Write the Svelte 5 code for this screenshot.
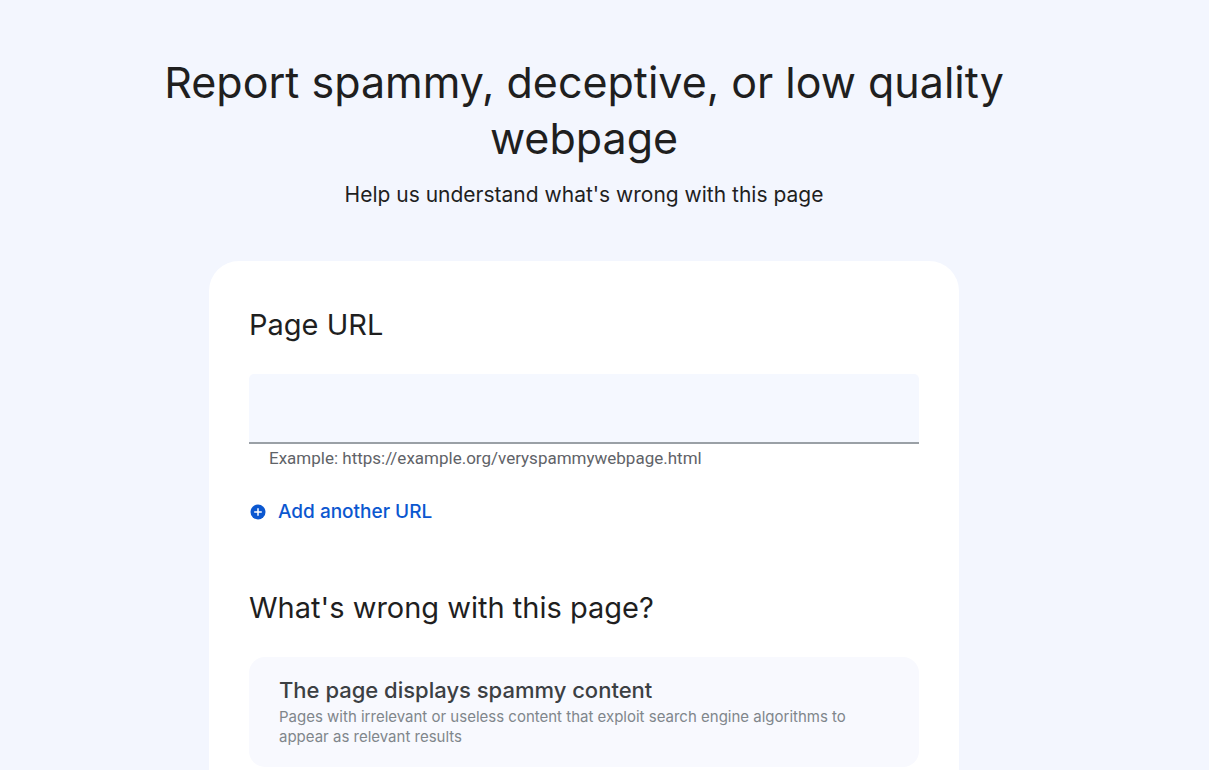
<script lang="ts">
	type Issue = {
		id: string;
		title: string;
		detail: string;
	};

	const issues: Issue[] = [
		{
			id: 'spammy',
			title: 'The page displays spammy content',
			detail:
				'Pages with irrelevant or useless content that exploit search engine algorithms to appear as relevant results'
		}
	];

	let urls = $state(['']);

	function addUrl() {
		urls.push('');
	}
</script>

<main class="page">
	<header class="intro">
		<h1>Report spammy, deceptive, or low quality webpage</h1>
		<p>Help us understand what's wrong with this page</p>
	</header>

	<form class="card">
		<h2 id="url-title">Page URL</h2>
		{#each urls as _, i}
			<div class="field">
				<input
					type="url"
					aria-labelledby="url-title"
					aria-describedby={`url-hint-${i}`}
					bind:value={urls[i]}
				/>
				<p class="hint" id={`url-hint-${i}`}>Example: https://example.org/veryspammywebpage.html</p>
			</div>
		{/each}

		<button type="button" class="add-btn" onclick={addUrl}>
			<svg viewBox="0 0 16 16" aria-hidden="true">
				<circle cx="8" cy="8" r="7.5" fill="currentColor" />
				<path d="M8 4.2v7.6M4.2 8h7.6" stroke="#fff" stroke-width="1.5" />
			</svg>
			Add another URL
		</button>

		<h2>What's wrong with this page?</h2>
		{#each issues as issue (issue.id)}
			<button type="button" class="issue">
				<span class="issue-title">{issue.title}</span>
				<span class="issue-detail">{issue.detail}</span>
			</button>
		{/each}
	</form>
</main>

<style>
	:global(body) {
		margin: 0;
		background: #f3f6fe;
	}

	.page {
		box-sizing: border-box;
		height: 100vh;
		overflow: hidden;
		padding: 54px 41px 0 0;
		font-family: Inter, sans-serif;
		color: #1f1f1f;
	}

	/* Intro */
	.intro {
		max-width: 900px;
		margin: 0 auto 50px;
		text-align: center;
	}

	h1 {
		margin: 0 0 13px;
		font-size: 43px;
		font-weight: 400;
		line-height: 56px;
	}

	.intro p {
		margin: 0;
		font-size: 21px;
		line-height: 32px;
	}

	/* Card */
	.card {
		box-sizing: border-box;
		max-width: 750px;
		margin: 0 auto;
		padding: 44px 40px 40px;
		border-radius: 30px;
		background: #fff;
	}

	h2 {
		margin: 0 0 29px;
		font-size: 29px;
		font-weight: 400;
		line-height: 40px;
	}

	/* URL field */
	input {
		display: block;
		box-sizing: border-box;
		width: 100%;
		height: 70px;
		padding: 0 20px;
		border: 0;
		border-bottom: 2px solid #9aa0a6;
		border-radius: 5px 5px 0 0;
		background: #f5f8ff;
		font-family: Roboto, sans-serif;
		font-size: 20px;
	}

	.hint {
		margin: 4px 20px 0;
		font-family: Roboto, sans-serif;
		font-size: 17px;
		line-height: 20px;
		color: #5f6368;
	}

	.add-btn {
		display: flex;
		align-items: center;
		gap: 12px;
		margin: 29px 0 61px;
		padding: 0 1px;
		border: 0;
		background: none;
		font-family: inherit;
		font-size: 19px;
		font-weight: 500;
		line-height: 30px;
		color: #0b57d0;
		cursor: pointer;
	}

	.add-btn svg {
		width: 16px;
		height: 16px;
	}

	/* Issue option */
	.issue {
		display: block;
		width: 100%;
		padding: 18px 30px 20px;
		border: 0;
		border-radius: 16px;
		background: #f8f9fe;
		font-family: inherit;
		text-align: left;
		cursor: pointer;
	}

	.issue-title,
	.issue-detail {
		display: block;
	}

	.issue-title {
		margin-bottom: 2px;
		font-size: 22px;
		font-weight: 500;
		line-height: 30px;
		color: #3c4043;
	}

	.issue-detail {
		font-size: 15px;
		line-height: 20px;
		color: #80868b;
	}
</style>
